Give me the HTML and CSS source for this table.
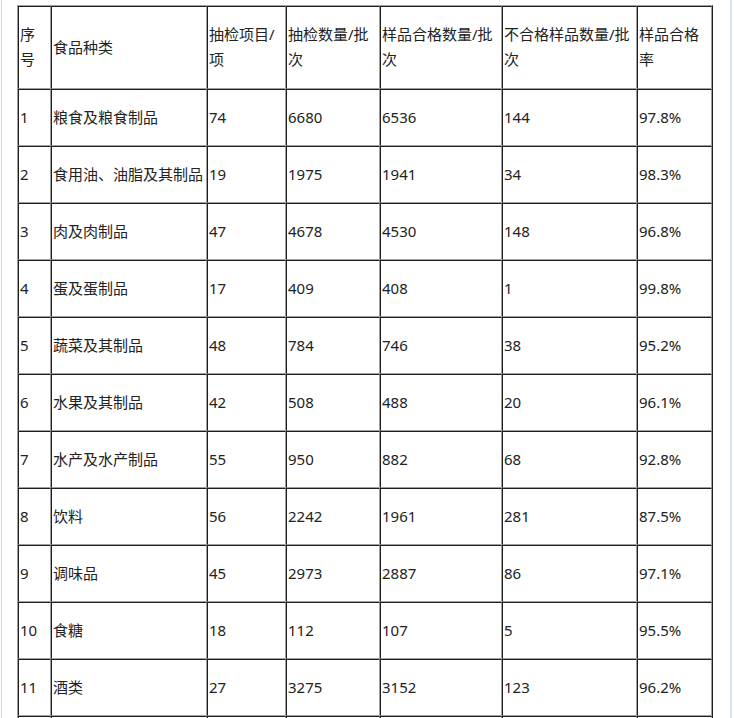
FILE: index.html
```html
<!DOCTYPE html>
<html lang="zh-CN">
<head>
<meta charset="utf-8">
<title>食品抽检</title>
<link rel="stylesheet" href="styles.css">
</head>
<body>
<div class="wrap">
<table class="data">
<tr class="head">
<td class="c1">序号</td>
<td class="c2">食品种类</td>
<td class="c3">抽检项目/项</td>
<td class="c4">抽检数量/批次</td>
<td class="c5">样品合格数量/批次</td>
<td class="c6">不合格样品数量/批次</td>
<td class="c7">样品合格率</td>
</tr>
<tr><td>1</td><td>粮食及粮食制品</td><td>74</td><td>6680</td><td>6536</td><td>144</td><td>97.8%</td></tr>
<tr><td>2</td><td>食用油、油脂及其制品</td><td>19</td><td>1975</td><td>1941</td><td>34</td><td>98.3%</td></tr>
<tr><td>3</td><td>肉及肉制品</td><td>47</td><td>4678</td><td>4530</td><td>148</td><td>96.8%</td></tr>
<tr><td>4</td><td>蛋及蛋制品</td><td>17</td><td>409</td><td>408</td><td>1</td><td>99.8%</td></tr>
<tr><td>5</td><td>蔬菜及其制品</td><td>48</td><td>784</td><td>746</td><td>38</td><td>95.2%</td></tr>
<tr><td>6</td><td>水果及其制品</td><td>42</td><td>508</td><td>488</td><td>20</td><td>96.1%</td></tr>
<tr><td>7</td><td>水产及水产制品</td><td>55</td><td>950</td><td>882</td><td>68</td><td>92.8%</td></tr>
<tr><td>8</td><td>饮料</td><td>56</td><td>2242</td><td>1961</td><td>281</td><td>87.5%</td></tr>
<tr><td>9</td><td>调味品</td><td>45</td><td>2973</td><td>2887</td><td>86</td><td>97.1%</td></tr>
<tr><td>10</td><td>食糖</td><td>18</td><td>112</td><td>107</td><td>5</td><td>95.5%</td></tr>
<tr><td>11</td><td>酒类</td><td>27</td><td>3275</td><td>3152</td><td>123</td><td>96.2%</td></tr>
<tr><td>&nbsp;</td><td>&nbsp;</td><td>&nbsp;</td><td>&nbsp;</td><td>&nbsp;</td><td>&nbsp;</td><td>&nbsp;</td></tr>
</table>
</div>
</body>
</html>
```
FILE: styles.css
```css
html, body {
  margin: 0;
  padding: 0;
  background: #fff;
}
body {
  font-family: "Noto Sans", "Noto Sans CJK SC", sans-serif;
  font-size: 15px;
  color: #222;
}
.wrap {
  margin-left: 1px;
  width: 713px;
  padding: 5px 0 0 15px;
  border-left: 1px solid #c9deee;
  border-right: 2px solid #d3e5f2;
  height: 718px;
  overflow: hidden;
  box-sizing: content-box;
}
.data {
  border-collapse: separate;
  border-spacing: 0;
  table-layout: fixed;
  width: 696px;
  border-style: solid;
  border-width: 1px;
  border-color: #a0a0a0 #1e1e1e #1e1e1e #a0a0a0;
}
.data td {
  box-sizing: border-box;
  border-style: solid;
  border-width: 1px;
  border-color: #1e1e1e #a0a0a0 #a0a0a0 #1e1e1e;
  padding: 15px 1px 15px 1px;
  line-height: 25px;
  vertical-align: middle;
  text-align: left;
  word-break: break-all;
}
.data .head td {
  padding-top: 15px;
  padding-bottom: 16px;
}
.c1 { width: 33px; }
.c2 { width: 156px; }
.c3 { width: 79px; }
.c4 { width: 94px; }
.c5 { width: 122px; }
.c6 { width: 135px; }
.c7 { width: 75px; }
```
